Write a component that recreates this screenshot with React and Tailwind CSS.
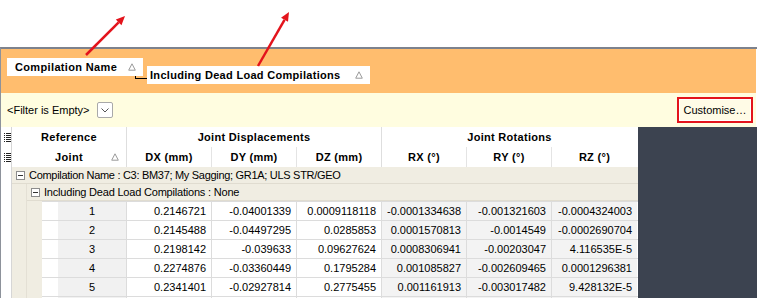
import React from 'react'

const rows = [
    ['1', '0.2146721', '-0.04001339', '0.0009118118', '-0.0001334638', '-0.001321603', '-0.0004324003'],
    ['2', '0.2145488', '-0.04497295', '0.0285853', '0.0001570813', '-0.0014549', '-0.0002690704'],
    ['3', '0.2198142', '-0.039633', '0.09627624', '0.0008306941', '-0.00203047', '4.116535E-5'],
    ['4', '0.2274876', '-0.03360449', '0.1795284', '0.001085827', '-0.002609465', '0.0001296381'],
    ['5', '0.2341401', '-0.02927814', '0.2775455', '0.001161913', '-0.003017482', '9.428132E-5'],
    ['', '', '', '', '', '', ''],
]

function SortTri() {
    return (
        <svg width="8" height="8" viewBox="0 0 8 8">
            <path d="M4 0.8 L7.3 7.2 L0.7 7.2 Z" fill="none" stroke="#9a9a9a" strokeWidth="1" />
        </svg>
    )
}

function ColIcon() {
    return (
        <svg width="7" height="9" viewBox="0 0 7 9">
            {[0, 2, 4, 6, 8].map(y => (
                <g key={y}>
                    <rect x="0" y={y} width="1" height="1" fill="#222" />
                    <rect x="2" y={y} width="5" height="1" fill="#222" />
                </g>
            ))}
        </svg>
    )
}

function MinusBox() {
    return (
        <span className="w-[9px] h-[9px] border border-[#8c8c8c] bg-white flex items-center justify-center shrink-0">
            <span className="w-[5px] h-px bg-[#333]" />
        </span>
    )
}

function Arrow({ x1, y1, x2, y2 }) {
    const a = Math.atan2(y2 - y1, x2 - x1)
    const L = 9
    const W = 4
    const bx = x2 - L * Math.cos(a)
    const by = y2 - L * Math.sin(a)
    const px = -Math.sin(a) * W
    const py = Math.cos(a) * W
    return (
        <g>
            <line x1={x1} y1={y1} x2={bx} y2={by} stroke="#e3141c" strokeWidth="2.5" />
            <polygon points={`${x2},${y2} ${bx + px},${by + py} ${bx - px},${by - py}`} fill="#e3141c" />
        </g>
    )
}

export default function App() {
    return (
        <div className="w-[757px] h-[298px] overflow-hidden bg-white relative text-[11px] text-black" style={{ fontFamily: '"Liberation Sans", Arial, sans-serif' }}>
            <div className="h-[47px]" />
            <div className="border-t-2 border-t-[#7d828d] border-l border-l-[#8d929b]">
                <div className="h-[44px] bg-[#ffbd6e] mr-px flex items-start pl-[6px] pt-[9px]">
                    <div className="w-[136px] h-[18px] bg-white flex items-center justify-between pl-[8px] pr-[7px] font-bold tracking-[0.35px]">
                        <span>Compilation Name</span>
                        <SortTri />
                    </div>
                    <div className="w-[12px] h-[3px] mt-[18px] -ml-[8px] border-l border-b border-black" />
                    <div className="w-[223px] h-[18px] mt-[8px] bg-white flex items-center justify-between pl-[3px] pr-[7px] font-bold tracking-[0.3px]">
                        <span>Including Dead Load Compilations</span>
                        <SortTri />
                    </div>
                </div>
                <div className="h-[34px] bg-[#fffde0] mr-px flex items-center justify-between pl-[6px] pr-[3px]">
                    <div className="flex items-center gap-[7px]">
                        <span>&lt;Filter is Empty&gt;</span>
                        <span className="w-[16px] h-[16px] border border-[#a9a9a9] rounded-[2px] bg-white flex items-center justify-center">
                            <svg width="8" height="5" viewBox="0 0 8 5">
                                <path d="M0.5 0.5 L4 4 L7.5 0.5" fill="none" stroke="#555" strokeWidth="1" />
                            </svg>
                        </span>
                    </div>
                    <div className="w-[76px] h-[26px] border-2 border-[#e3141c] flex">
                        <div className="flex-1 border border-white bg-[#fffbe6] flex items-center justify-center">Customise…</div>
                    </div>
                </div>
                <div className="flex">
                    <div className="w-[637px] shrink-0">
                        <div className="flex bg-white font-bold tracking-[0.3px]">
                            <div className="w-[11px] border-r border-[#d6d6d6] flex flex-col items-center">
                                <div className="h-[20px] flex items-center pl-[2px]"><ColIcon /></div>
                                <div className="h-[20px] flex items-center pl-[2px]"><ColIcon /></div>
                            </div>
                            <div className="w-[115px] border-r border-[#dedede]">
                                <div className="h-[20px] flex items-center justify-center">Reference</div>
                                <div className="h-[20px] flex items-center justify-center relative">
                                    <span>Joint</span>
                                    <span className="absolute right-[7px] top-[6px]"><SortTri /></span>
                                </div>
                            </div>
                            <div className="w-[255px] border-r border-[#dedede]">
                                <div className="h-[20px] flex items-center justify-center">Joint Displacements</div>
                                <div className="h-[20px] flex">
                                    <div className="w-[85px] border-r border-[#e4e4e4] flex items-center justify-center">DX (mm)</div>
                                    <div className="w-[85px] border-r border-[#e4e4e4] flex items-center justify-center">DY (mm)</div>
                                    <div className="flex-1 flex items-center justify-center">DZ (mm)</div>
                                </div>
                            </div>
                            <div className="w-[255px]">
                                <div className="h-[20px] flex items-center justify-center">Joint Rotations</div>
                                <div className="h-[20px] flex">
                                    <div className="w-[85px] border-r border-[#e4e4e4] flex items-center justify-center">RX (°)</div>
                                    <div className="w-[85px] border-r border-[#e4e4e4] flex items-center justify-center">RY (°)</div>
                                    <div className="flex-1 flex items-center justify-center">RZ (°)</div>
                                </div>
                            </div>
                        </div>
                        <div className="flex">
                            <div className="w-[11px] border-r border-[#d6d6d6] bg-white" />
                            <div className="flex-1 bg-[#f0ede2]">
                                <div className="h-[17px] border-b border-[#e0dcd0] flex items-center gap-[4px] pl-[4px] tracking-[-0.3px]">
                                    <MinusBox />
                                    <span>Compilation Name : C3: BM37; My Sagging; GR1A; ULS STR/GEO</span>
                                </div>
                                <div className="flex">
                                    <div className="w-[15px] border-r border-[#e4e0d5]" />
                                    <div className="flex-1">
                                        <div className="h-[17px] border-b border-[#e0dcd0] flex items-center gap-[4px] pl-[4px] tracking-[-0.2px]">
                                            <MinusBox />
                                            <span>Including Dead Load Compilations : None</span>
                                        </div>
                                        <div className="flex">
                                            <div className="w-[15px]" />
                                            <div className="flex-1">
                                                {rows.map((r, i) => (
                                                    <div key={i} className="h-[19px] flex border-t border-[#dcdcdc] bg-white">
                                                        <div className="w-[16px] bg-white" />
                                                        <div className="w-[69px] bg-[#f1f1f1] border-r border-[#dcdcdc] flex items-center justify-center">{r[0]}</div>
                                                        {r.slice(1).map((v, j) => (
                                                            <div key={j} className={'w-[85px] flex items-center justify-end pr-[5px] ' + (j < 5 ? 'border-r border-[#dcdcdc] ' : '') + (j < 3 ? 'bg-white' : 'bg-[#f3f3f3]')}>{v}</div>
                                                        ))}
                                                    </div>
                                                ))}
                                            </div>
                                        </div>
                                    </div>
                                </div>
                            </div>
                        </div>
                    </div>
                    <div className="flex-1 bg-[#3c4350] h-[200px]" />
                </div>
            </div>
            <svg className="absolute left-0 top-0 pointer-events-none" width="757" height="298">
                <Arrow x1={86} y1={55} x2={125} y2={16} />
                <Arrow x1={258} y1={66} x2={289} y2={12} />
            </svg>
        </div>
    )
}
